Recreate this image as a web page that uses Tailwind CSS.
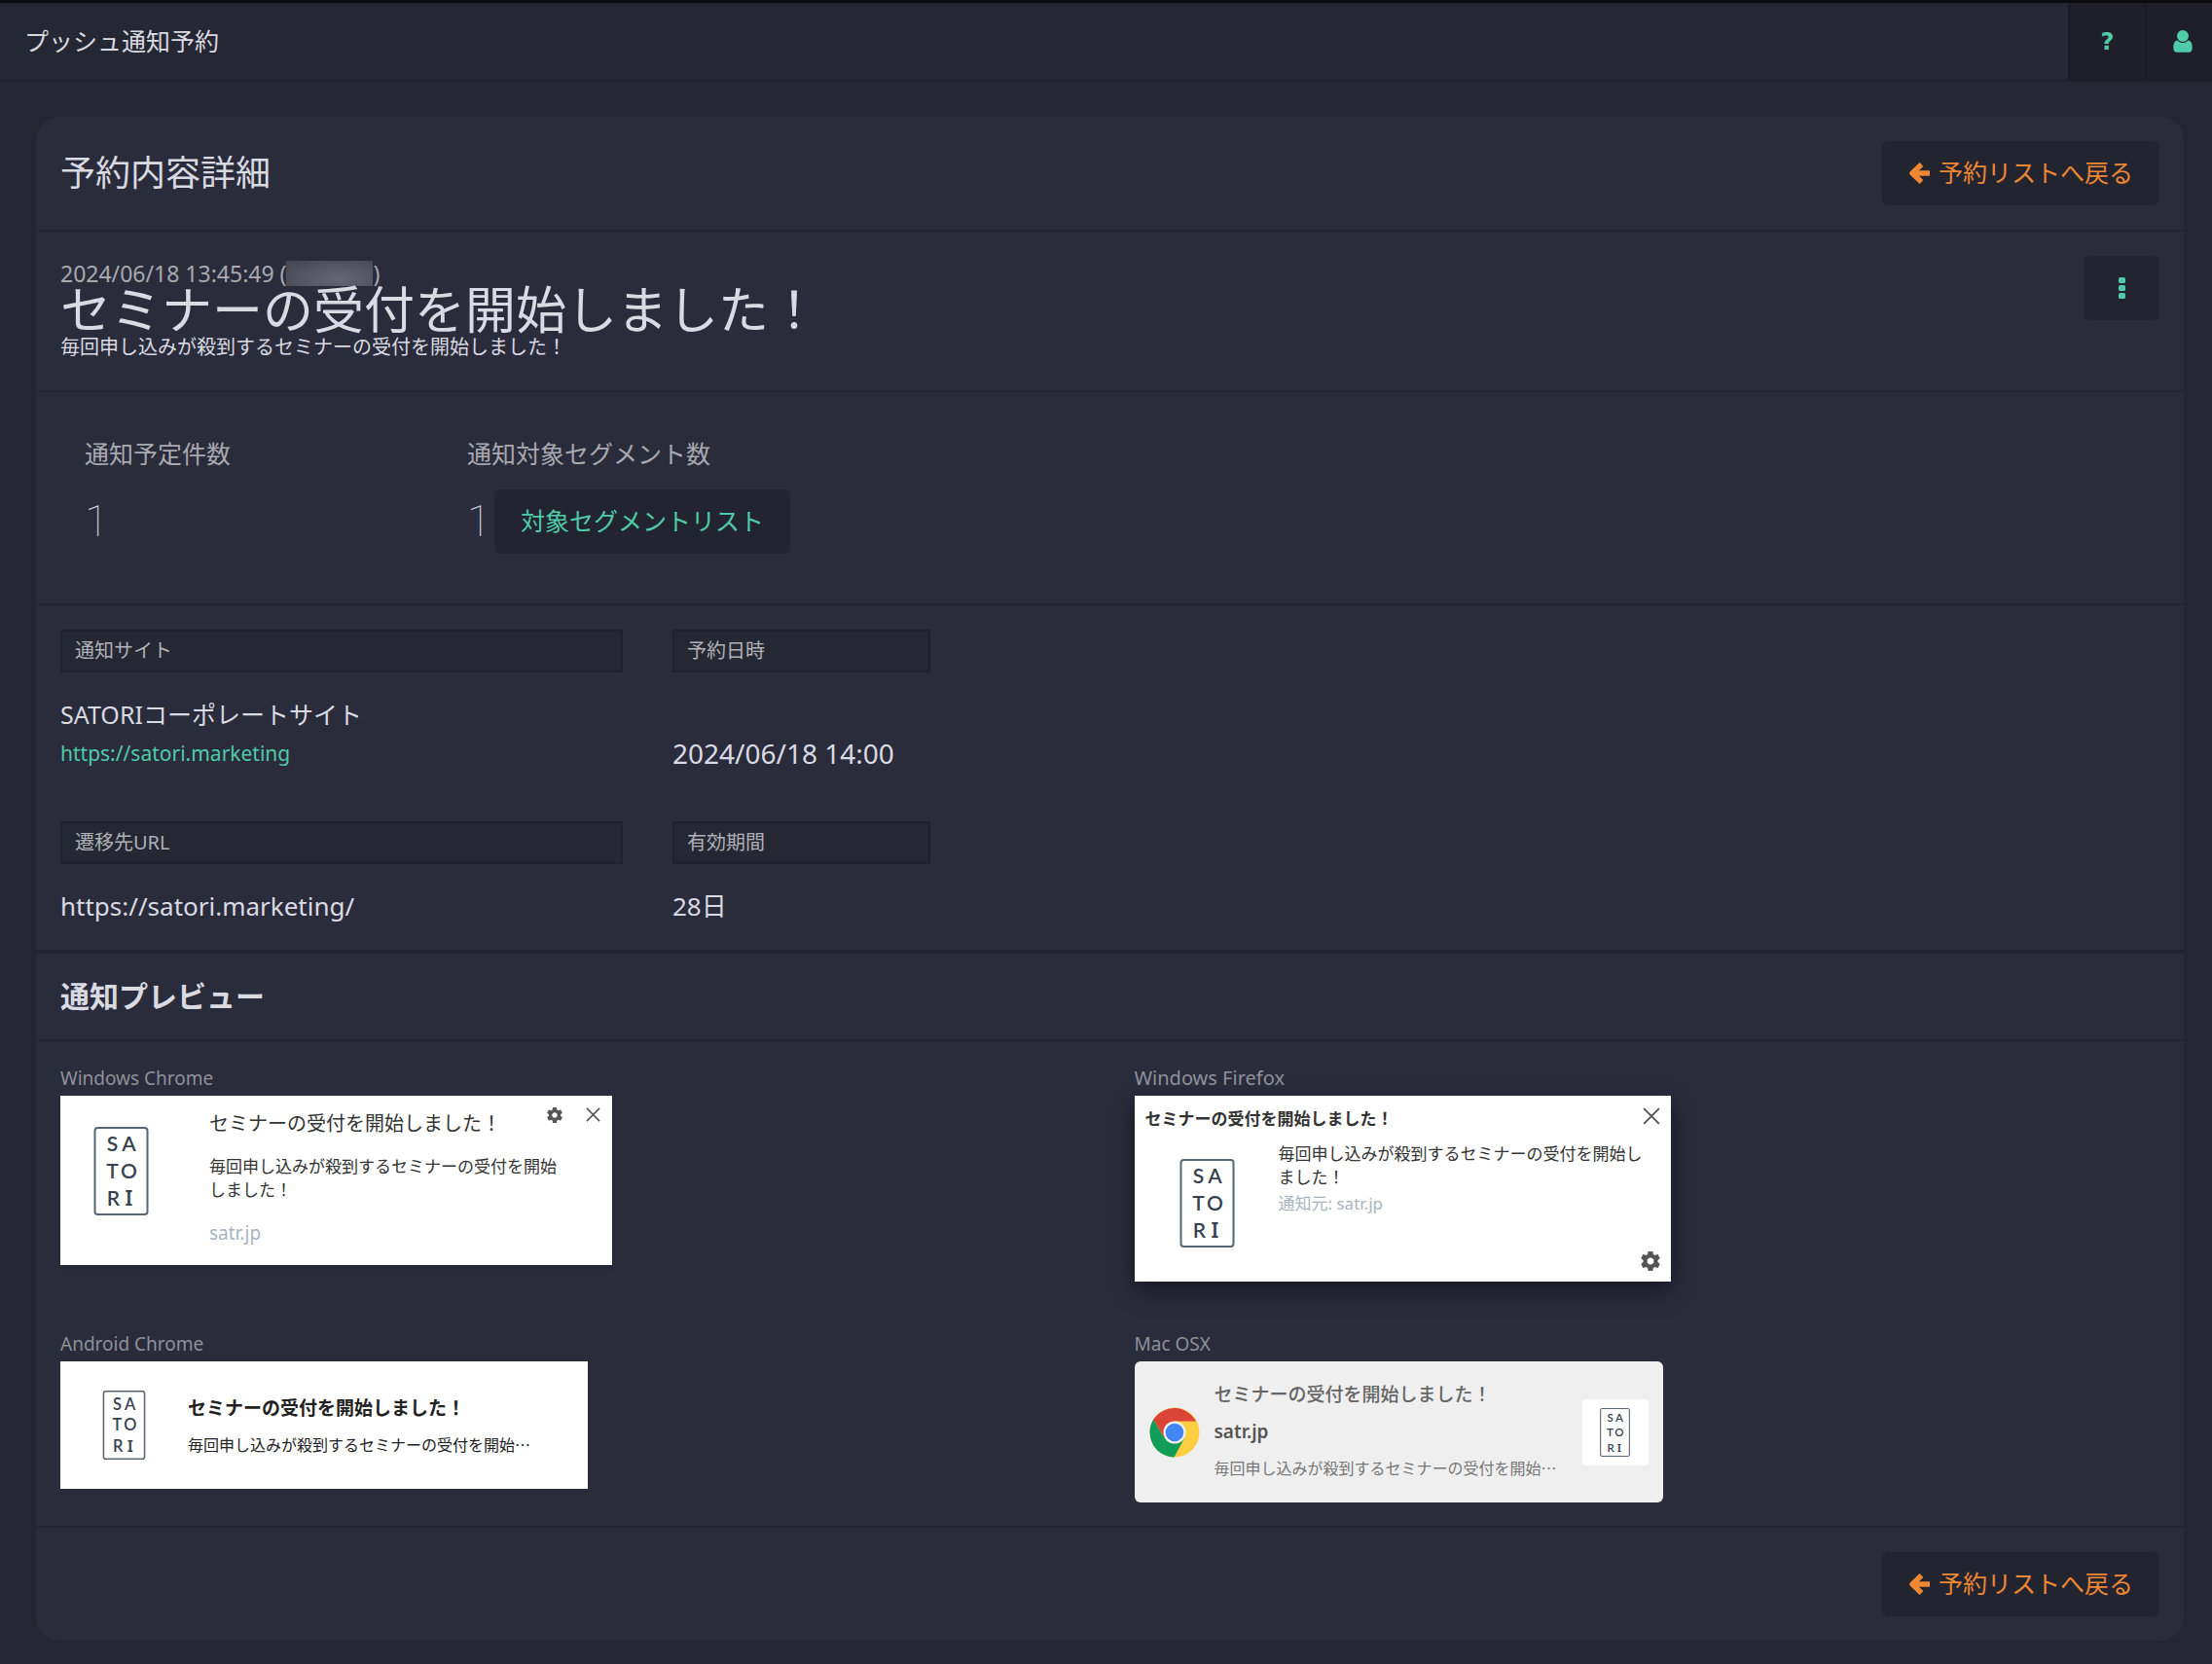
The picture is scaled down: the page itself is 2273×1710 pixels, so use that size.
<!DOCTYPE html>
<html lang="ja">
<head>
  <meta charset="UTF-8" />
  <meta name="viewport" content="width=device-width, initial-scale=1.0" />
  <title>プッシュ通知予約</title>
  <script src="https://cdn.jsdelivr.net/npm/@tailwindcss/browser@4"></script>
</head>
<body class="min-h-screen bg-[#242631] font-['Noto_Sans','Noto_Sans_CJK_JP',sans-serif] text-[#dadae2]">
  <!-- Shared icons -->
  <svg class="hidden" aria-hidden="true">
    <symbol id="logo" viewBox="0 0 56 91">
      <rect x="1" y="1" width="54" height="89" rx="3" fill="#fff" stroke="#5a6572" stroke-width="2" />
      <g fill="#364250" font-family="Lato" font-size="21" font-weight="600" text-anchor="middle">
        <text x="19" y="25">S</text><text x="36" y="25">A</text>
        <text x="19" y="53">T</text><text x="36" y="53">O</text>
        <text x="20" y="81">R</text><text x="36" y="81" font-family="Noto Sans">I</text>
      </g>
    </symbol>
    <symbol id="gear" viewBox="2 2 20 20">
      <path fill="#555" d="M19.43 12.98c.04-.32.07-.64.07-.98s-.03-.66-.07-.98l2.11-1.65c.19-.15.24-.42.12-.64l-2-3.46c-.12-.22-.39-.3-.61-.22l-2.49 1c-.52-.4-1.08-.73-1.69-.98l-.38-2.65C14.46 2.18 14.25 2 14 2h-4c-.25 0-.46.18-.49.42l-.38 2.65c-.61.25-1.17.59-1.69.98l-2.49-1c-.23-.09-.49 0-.61.22l-2 3.46c-.13.22-.07.49.12.64l2.11 1.65c-.04.32-.07.65-.07.98s.03.66.07.98l-2.11 1.65c-.19.15-.24.42-.12.64l2 3.46c.12.22.39.3.61.22l2.49-1c.52.4 1.08.73 1.69.98l.38 2.65c.03.24.24.42.49.42h4c.25 0 .46-.18.49-.42l.38-2.65c.61-.25 1.17-.59 1.69-.98l2.49 1c.23.09.49 0 .61-.22l2-3.46c.12-.22.07-.49-.12-.64l-2.11-1.65zM12 15.5c-1.93 0-3.500-1.570-3.500-3.500s1.570-3.500 3.500-3.500 3.500 1.570 3.500 3.500-1.570 3.500-3.500 3.500z" />
    </symbol>
    <symbol id="close" viewBox="0 0 16 16">
      <path fill="none" stroke="#555" stroke-width="1.700" d="M1 1 15 15M15 1 1 15" />
    </symbol>
    <symbol id="arrow-left" viewBox="0 0 22 22">
      <path fill="none" stroke="currentColor" stroke-width="5.500" stroke-linejoin="round" d="M22 11H4M13.500 1.900 4 11l9.500 9.100" />
    </symbol>
  </svg>

  <!-- Top bar -->
  <header class="flex h-[84px] items-stretch border-t-[3px] border-b-2 border-t-[#0c0c10] border-b-[#1f202b] bg-[#252732]">
    <h1 class="flex grow items-center pl-[25px] text-[25px]">プッシュ通知予約</h1>
    <a href="#" aria-label="ヘルプ" class="flex w-[79px] items-center justify-center border-l-2 border-[#1a1b25] bg-[#1f1f2a] font-['DejaVu_Sans'] text-[24px] font-bold text-[#4fcba8]">?</a>
    <a href="#" aria-label="アカウント" class="flex w-[69px] items-center border-l-2 border-[#1a1b25] bg-[#1f1f2a] pl-[27px] text-[#4fcba8]">
      <svg class="h-[23px] w-[20px]" viewBox="0 0 20 23" fill="currentColor">
        <circle cx="10" cy="6" r="6" />
        <path d="M4.500 10.500C1.200 11 .3 14 .3 18c0 3 1.200 4.800 3.700 4.800h12c2.500 0 3.700-1.800 3.700-4.800 0-4-.9-7-4.200-7.500C13.500 12.600 11.800 13 10 13s-3.500-.4-5.500-2.500z" />
      </svg>
    </a>
  </header>

  <main class="pt-[35px] pr-[28px] pb-[23px] pl-[36px]">
    <div class="overflow-hidden rounded-[25px] border border-[#232530] bg-[#2a2c3c]">
      <!-- Card header -->
      <div class="flex items-center justify-between border-b-2 border-[#232530] px-[25px] py-[25px]">
        <h2 class="text-[36px] leading-[48px]">予約内容詳細</h2>
        <button class="flex h-[66px] items-center gap-[9px] rounded-md bg-[#222530] px-[27px] text-[25px] text-[#ee8733]">
          <svg class="size-[22px]"><use href="#arrow-left" /></svg>予約リストへ戻る
        </button>
      </div>

      <!-- Message -->
      <div class="flex items-start justify-between border-b-2 border-[#232530] px-[25px] py-[25px]">
        <div class="pt-[3px] pb-[3px]">
          <p class="flex items-center text-[23px] leading-[30px] text-[#a9a9af]">
            <span>2024/06/18 13:45:49 (</span>
            <span class="h-[26px] w-[89px] bg-radial-[at_60%_70%] from-[#666776] to-[#424451]"></span>
            <span>)</span>
          </p>
          <h3 class="text-[52px] leading-[44px]">セミナーの受付を開始しました！</h3>
          <p class="text-[20px] leading-[33px]">毎回申し込みが殺到するセミナーの受付を開始しました！</p>
        </div>
        <button aria-label="メニュー" class="flex h-[66px] w-[78px] items-center justify-center rounded-md bg-[#222530] text-[#4fcba8]">
          <svg class="h-[22px] w-[7px]" viewBox="0 0 7 22" fill="currentColor">
            <rect width="7" height="6" rx="1.500" /><rect y="8" width="7" height="6" rx="1.500" /><rect y="16" width="7" height="6" rx="1.500" />
          </svg>
        </button>
      </div>

      <!-- Counts -->
      <div class="flex border-b-2 border-[#232530] px-[50px] pt-[44px] pb-[51px] text-[#a9a9af]">
        <div class="w-[393px]">
          <p class="text-[25px] leading-[38px]">通知予定件数</p>
          <p class="mt-[18px] flex h-[66px] items-center font-[Roboto] text-[44px] font-thin text-[#d0d0dc]">1</p>
        </div>
        <div>
          <p class="text-[25px] leading-[38px]">通知対象セグメント数</p>
          <div class="mt-[18px] flex h-[66px] items-center gap-1">
            <span class="font-[Roboto] text-[44px] font-thin text-[#d0d0dc]">1</span>
            <button class="h-[66px] rounded-md bg-[#222530] px-[27px] text-[25px] text-[#4fcba8]">対象セグメントリスト</button>
          </div>
        </div>
      </div>

      <!-- Details -->
      <dl class="grid grid-cols-[578px_265px] gap-x-[51px] gap-y-[50px] border-b-4 border-[#212430] px-[25px] py-[25px] text-[26px] leading-[40px]">
        <div>
          <dt class="mb-[23px] h-[44px] border-2 border-[#1f212c] bg-[#252733] px-[13px] text-[20px] text-[#b0b0b7]">通知サイト</dt>
          <dd class="text-[25px]">SATORIコーポレートサイト</dd>
          <dd><a href="#" class="block text-[21px] text-[#4fcba8]">https://satori.marketing</a></dd>
        </div>
        <div class="flex flex-col justify-between">
          <dt class="h-[44px] border-2 border-[#1f212c] bg-[#252733] px-[13px] text-[20px] text-[#b0b0b7]">予約日時</dt>
          <dd class="text-[28px]">2024/06/18 14:00</dd>
        </div>
        <div>
          <dt class="mb-[23px] h-[44px] border-2 border-[#1f212c] bg-[#252733] px-[13px] text-[20px] text-[#b0b0b7]">遷移先URL</dt>
          <dd>https://satori.marketing/</dd>
        </div>
        <div>
          <dt class="mb-[23px] h-[44px] border-2 border-[#1f212c] bg-[#252733] px-[13px] text-[20px] text-[#b0b0b7]">有効期間</dt>
          <dd>28日</dd>
        </div>
      </dl>

      <!-- Previews -->
      <h3 class="border-b-2 border-[#232530] px-[25px] py-[25px] text-[30px] leading-[38px] font-bold">通知プレビュー</h3>
      <div class="grid grid-cols-2 gap-y-[50px] border-b-2 border-[#232530] py-[24px] text-[#333]">
        <section class="px-[25px]">
          <h4 class="mb-1 text-[19px] leading-[28px] text-[#8f9099]">Windows Chrome</h4>
          <div class="flex h-[174px] w-[567px] bg-white pl-[34px] shadow-md">
            <svg class="mt-[32px] h-[91px] w-[57px] shrink-0"><use href="#logo" /></svg>
            <div class="ml-[62px] grow pt-[12px] pr-[12px]">
              <div class="flex justify-between">
                <p class="text-[20px] leading-[34px]">セミナーの受付を開始しました！</p>
                <div class="flex items-start gap-[24px]">
                  <button aria-label="設定"><svg class="size-[16px]"><use href="#gear" /></svg></button>
                  <button aria-label="閉じる"><svg class="size-[15px]"><use href="#close" /></svg></button>
                </div>
              </div>
              <p class="mt-[15px] max-w-[366px] text-[17px] leading-[24px]">毎回申し込みが殺到するセミナーの受付を開始しました！</p>
              <p class="mt-[18px] text-[19px] leading-[28px] text-[#a8b3c0]">satr.jp</p>
            </div>
          </div>
        </section>

        <section class="px-[25px]">
          <h4 class="mb-1 text-[20px] leading-[28px] text-[#8f9099]">Windows Firefox</h4>
          <div class="h-[191px] w-[551px] bg-white px-[11px] pt-[8px] shadow-[0_8px_20px_rgba(0,0,0,0.5)]">
            <div class="flex justify-between">
              <p class="text-[17px] leading-[32px] font-bold">セミナーの受付を開始しました！</p>
              <button aria-label="閉じる" class="mt-[4px] self-start"><svg class="size-[18px]"><use href="#close" /></svg></button>
            </div>
            <div class="mt-2 flex h-[108px] gap-[45px] pl-[35px]">
              <svg class="mt-[17px] h-[91px] w-[57px] shrink-0"><use href="#logo" /></svg>
              <div class="w-[380px]">
                <p class="text-[17px] leading-[24px]">毎回申し込みが殺到するセミナーの受付を開始しました！</p>
                <p class="mt-[3px] text-[17px] leading-[24px] text-[#a8b3c0]">通知元: satr.jp</p>
              </div>
            </div>
            <div class="mt-1 flex justify-end">
              <button aria-label="設定"><svg class="size-[20px]"><use href="#gear" /></svg></button>
            </div>
          </div>
        </section>

        <section class="px-[25px]">
          <h4 class="mb-1 text-[19px] leading-[28px] text-[#8f9099]">Android Chrome</h4>
          <div class="flex h-[131px] w-[542px] items-center gap-[43px] bg-white pl-[43px]">
            <svg class="h-[71px] w-[45px] shrink-0"><use href="#logo" /></svg>
            <div class="w-[353px] font-['Noto_Sans_CJK_JP',sans-serif] text-[#222]">
              <p class="text-[19px] leading-[38px] font-bold">セミナーの受付を開始しました！</p>
              <p class="truncate text-[16px] leading-[38px]">毎回申し込みが殺到するセミナーの受付を開始しました！</p>
            </div>
          </div>
        </section>

        <section class="px-[25px]">
          <h4 class="mb-1 text-[19px] leading-[28px] text-[#8f9099]">Mac OSX</h4>
          <div class="flex h-[145px] w-[543px] items-center rounded-md bg-[#efefef] px-[15px]">
            <svg class="size-[52px] shrink-0" viewBox="0 0 52 52">
              <circle cx="26" cy="26" r="25.500" fill="#ffcd40" />
              <path fill="#db4437" d="M26 26 3.900 13.250A25.500 25.500 0 0 1 48.100 14.500H26z" />
              <path fill="#0f9d58" d="M4.300 12.600A25.500 25.500 0 0 0 25.500 51.500L36 32 26 26 15.500 31.800z" />
              <path fill="#db4437" d="M4.300 12.600 15.500 31.800 26 26V14.500H10z" />
              <circle cx="26" cy="26" r="11.500" fill="#f1f1f1" />
              <circle cx="26" cy="26" r="9.300" fill="#4285f4" />
            </svg>
            <div class="ml-[15px] w-[353px] pb-[6px] font-['Noto_Sans_CJK_JP',sans-serif]">
              <p class="text-[19px] leading-[40px] font-medium text-[#666]">セミナーの受付を開始しました！</p>
              <p class="font-['Noto_Sans'] text-[19px] leading-[38px] font-semibold text-[#555]">satr.jp</p>
              <p class="truncate text-[16px] leading-[36px] text-[#777]">毎回申し込みが殺到するセミナーの受付を開始しました！</p>
            </div>
            <div class="ml-auto flex size-[68px] items-center justify-center rounded-sm bg-white">
              <svg class="h-[50px] w-[31px]"><use href="#logo" /></svg>
            </div>
          </div>
        </section>
      </div>

      <!-- Card footer -->
      <div class="flex justify-end px-[25px] py-[25px]">
        <button class="flex h-[66px] items-center gap-[9px] rounded-md bg-[#222530] px-[27px] text-[25px] text-[#ee8733]">
          <svg class="size-[22px]"><use href="#arrow-left" /></svg>予約リストへ戻る
        </button>
      </div>
    </div>
  </main>
</body>
</html>
